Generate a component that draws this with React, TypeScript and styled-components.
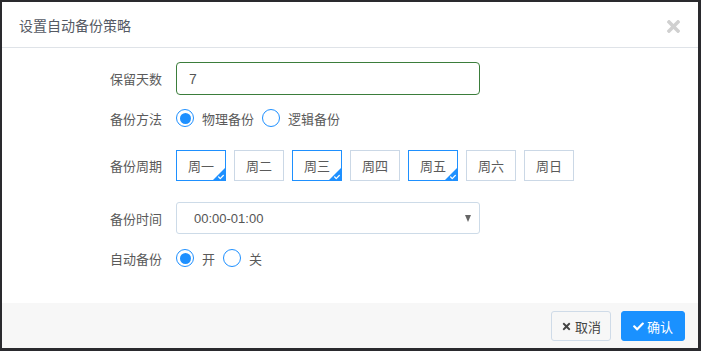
import React, { useState } from "react"
import styled, { createGlobalStyle } from "styled-components"
import { FaTimes, FaCheck } from "react-icons/fa"

const GlobalStyle = createGlobalStyle`
  html, body {
    margin: 0;
    padding: 0;
    background: #2a2a2e;
  }
  body {
    font-family: "Noto Sans CJK SC", "Noto Sans", sans-serif;
  }
`

const Page = styled.div`
  width: 701px;
  height: 351px;
  padding: 2px 3px 3px 2px;
  box-sizing: border-box;
`

const Modal = styled.div`
  height: 100%;
  background: #fff;
  display: flex;
  flex-direction: column;
`

const Header = styled.div`
  height: 45px;
  display: flex;
  align-items: center;
  justify-content: space-between;
  padding: 0 15px 0 17px;
  border-bottom: 1px solid #dfe3e8;
`

const Title = styled.div`
  font-size: 14px;
  color: #555a64;
`

const Close = styled.span`
  color: #d0d0d0;
  font-size: 19px;
  display: flex;
  margin-top: 3px;
`

const Body = styled.div`
  flex: 1;
  padding: 14px 0 0 0;
  display: flex;
  flex-direction: column;
`

const Row = styled.div<{ h: number }>`
  display: flex;
  align-items: center;
  height: ${({ h }) => h}px;
`

const Label = styled.div`
  width: 160px;
  text-align: right;
  padding-right: 14px;
  font-size: 13px;
  color: #5a5a5a;
`

const TextInput = styled.input`
  width: 304px;
  height: 33px;
  box-sizing: border-box;
  border: 1px solid #3b7d3b;
  border-radius: 4px;
  padding: 0 12px;
  font-size: 14px;
  color: #555;
  font-family: "Liberation Sans", sans-serif;
  outline: none;
`

const Radios = styled.div`
  display: flex;
  align-items: center;
  gap: 8px;
`

const RadioItem = styled.label`
  display: flex;
  align-items: center;
  gap: 8px;
  font-size: 13px;
  color: #5a5a5a;
  cursor: pointer;
`

const Dot = styled.span<{ on: boolean }>`
  width: 18px;
  height: 18px;
  box-sizing: border-box;
  border-radius: 50%;
  border: 1.5px solid #1e90ff;
  display: flex;
  align-items: center;
  justify-content: center;
  &::after {
    content: "";
    width: 11px;
    height: 11px;
    border-radius: 50%;
    background: ${({ on }) => (on ? "#1e90ff" : "transparent")};
  }
`

const Days = styled.div`
  display: flex;
  gap: 8px;
`

const Day = styled.div<{ on: boolean }>`
  position: relative;
  width: 50px;
  height: 31px;
  box-sizing: border-box;
  border: 1px solid ${({ on }) => (on ? "#1e90ff" : "#cbd8e6")};
  display: flex;
  align-items: center;
  justify-content: center;
  font-size: 13px;
  color: #5a5a5a;
  cursor: pointer;
  overflow: hidden;
`

const Corner = styled.span`
  position: absolute;
  right: 0;
  bottom: 0;
  width: 0;
  height: 0;
  border-style: solid;
  border-width: 0 0 12px 12px;
  border-color: transparent transparent #1e90ff transparent;
`

const CornerTick = styled.span`
  position: absolute;
  right: 1px;
  bottom: 0;
  color: #fff;
  font-size: 6px;
  display: flex;
`

const Select = styled.div`
  width: 304px;
  height: 32px;
  box-sizing: border-box;
  border: 1px solid #cddbe8;
  border-radius: 3px;
  display: flex;
  align-items: center;
  justify-content: space-between;
  padding: 0 8px 0 17px;
  font-size: 13px;
  color: #555;
  font-family: "Liberation Sans", sans-serif;
`

const Caret = styled.span`
  width: 0;
  height: 0;
  border-left: 3.5px solid transparent;
  border-right: 3.5px solid transparent;
  border-top: 7px solid #666;
`

const Footer = styled.div`
  height: 45px;
  background: #f7f7f7;
  display: flex;
  justify-content: flex-end;
  align-items: flex-start;
  padding: 8px 13px 0 0;
  box-sizing: border-box;
  gap: 10px;
`

const Button = styled.button<{ primary?: boolean }>`
  height: 30px;
  padding: 0 ${({ primary }) => (primary ? "11px" : "9px")};
  border-radius: 3px;
  border: 1px solid ${({ primary }) => (primary ? "#1a91ff" : "#cfdbe8")};
  background: ${({ primary }) => (primary ? "#1a91ff" : "#f7f7f7")};
  color: ${({ primary }) => (primary ? "#fff" : "#444")};
  font-size: 13px;
  font-family: "Noto Sans CJK SC", sans-serif;
  display: flex;
  align-items: center;
  gap: 3px;
  cursor: pointer;
  svg {
    font-size: 11px;
  }
`

const days = ["周一", "周二", "周三", "周四", "周五", "周六", "周日"]

export default function App() {
  const [method, setMethod] = useState(0)
  const [auto, setAuto] = useState(true)
  const [sel, setSel] = useState([true, false, true, false, true, false, false])

  const toggle = (i: number) =>
    setSel(s => s.map((v, j) => (j === i ? !v : v)))

  return (
    <Page>
      <GlobalStyle />
      <Modal>
        <Header>
          <Title>设置自动备份策略</Title>
          <Close>
            <FaTimes />
          </Close>
        </Header>
        <Body>
          <Row h={33}>
            <Label>保留天数</Label>
            <TextInput defaultValue="7" />
          </Row>
          <Row h={46}>
            <Label>备份方法</Label>
            <Radios>
              <RadioItem onClick={() => setMethod(0)}>
                <Dot on={method === 0} />
                物理备份
              </RadioItem>
              <RadioItem onClick={() => setMethod(1)}>
                <Dot on={method === 1} />
                逻辑备份
              </RadioItem>
            </Radios>
          </Row>
          <Row h={49}>
            <Label>备份周期</Label>
            <Days>
              {days.map((d, i) => (
                <Day key={d} on={sel[i]} onClick={() => toggle(i)}>
                  {d}
                  {sel[i] && (
                    <>
                      <Corner />
                      <CornerTick>
                        <FaCheck />
                      </CornerTick>
                    </>
                  )}
                </Day>
              ))}
            </Days>
          </Row>
          <Row h={56}>
            <Label>备份时间</Label>
            <Select>
              00:00-01:00
              <Caret />
            </Select>
          </Row>
          <Row h={24}>
            <Label>自动备份</Label>
            <Radios>
              <RadioItem onClick={() => setAuto(true)}>
                <Dot on={auto} />开
              </RadioItem>
              <RadioItem onClick={() => setAuto(false)}>
                <Dot on={!auto} />关
              </RadioItem>
            </Radios>
          </Row>
        </Body>
        <Footer>
          <Button>
            <FaTimes />
            取消
          </Button>
          <Button primary>
            <FaCheck />
            确认
          </Button>
        </Footer>
      </Modal>
    </Page>
  )
}
